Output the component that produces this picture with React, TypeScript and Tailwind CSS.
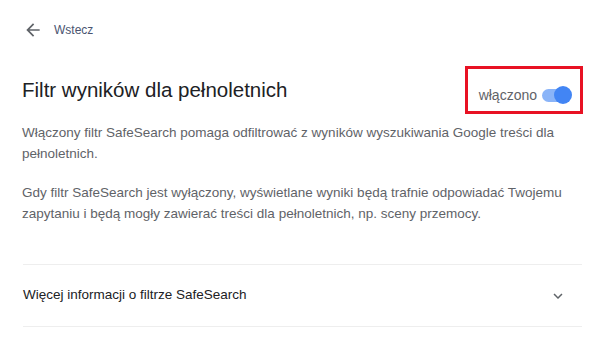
import React from "react";

export default function App() {
  return (
    <div className="w-[602px] h-[361px] bg-white overflow-hidden" style={{ fontFamily: '"Liberation Sans", Arial, sans-serif' }}>
      <div className="pl-[23px] pr-[20px]">
        <div className="flex items-center h-[60px]">
          <svg width="20" height="20" viewBox="0 0 24 24" className="text-[#5f6368]">
            <path d="M20 11H7.83l5.59-5.59L12 4l-8 8 8 8 1.41-1.41L7.83 13H20v-2z" fill="currentColor" />
          </svg>
          <span className="ml-[11px] text-[12px] text-[#4a5470]">Wstecz</span>
        </div>
        <div className="flex items-start justify-between pt-[6px]">
          <h1 className="text-[20.5px] leading-[26px] text-[#202124] pt-[11px] -ml-[1px]">Filtr wyników dla pełnoletnich</h1>
          <div className="w-[118px] h-[48px] border-[3px] border-[#e81123] flex items-center justify-end pr-[8px] mr-[-1px]">
            <span className="text-[14px] text-[#5f6368] mt-[10px]">włączono</span>
            <div className="relative ml-[5px] mt-[10px] w-[30px] h-[18px] flex items-center">
              <div className="w-[28px] h-[13px] rounded-full bg-[#8ab4f8]" />
              <div className="absolute right-0 w-[18px] h-[18px] rounded-full bg-[#4285f4]" />
            </div>
          </div>
        </div>
        <div className="text-[13.5px] leading-[21px] text-[#5f6368] mt-[8px] -ml-[1px]">
          <p>Włączony filtr SafeSearch pomaga odfiltrować z wyników wyszukiwania Google treści dla pełnoletnich.</p>
          <p className="mt-[18px]">Gdy filtr SafeSearch jest wyłączony, wyświetlane wyniki będą trafnie odpowiadać Twojemu zapytaniu i będą mogły zawierać treści dla pełnoletnich, np. sceny przemocy.</p>
        </div>
        <div className="mt-[40px] border-t border-b border-[#eeeeee] h-[63px] flex items-center justify-between">
          <span className="text-[13.5px] text-[#202124]">Więcej informacji o filtrze SafeSearch</span>
          <svg width="18" height="18" viewBox="0 0 24 24" className="mr-[15px] text-[#5f6368]">
            <path d="M7.41 8.59 12 13.17l4.59-4.58L18 10l-6 6-6-6 1.41-1.41z" fill="currentColor" />
          </svg>
        </div>
      </div>
    </div>
  );
}
